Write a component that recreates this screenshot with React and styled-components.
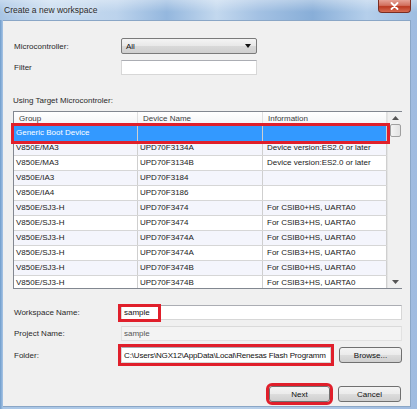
import React from 'react';
import styled, {createGlobalStyle} from "styled-components";

const Global = createGlobalStyle`
  html, body { margin: 0; padding: 0; }
  body {
    font-family: "Liberation Sans", Arial, sans-serif;
    font-size: 8px;
    color: #222;
  }
`

const rows = [
    ["V850E/MA3", "UPD70F3134A", "Device version:ES2.0 or later"],
    ["V850E/MA3", "UPD70F3134B", "Device version:ES2.0 or later"],
    ["V850E/IA3", "UPD70F3184", ""],
    ["V850E/IA4", "UPD70F3186", ""],
    ["V850E/SJ3-H", "UPD70F3474", "For CSIB0+HS, UARTA0"],
    ["V850E/SJ3-H", "UPD70F3474", "For CSIB3+HS, UARTA0"],
    ["V850E/SJ3-H", "UPD70F3474A", "For CSIB0+HS, UARTA0"],
    ["V850E/SJ3-H", "UPD70F3474A", "For CSIB3+HS, UARTA0"],
    ["V850E/SJ3-H", "UPD70F3474B", "For CSIB0+HS, UARTA0"],
    ["V850E/SJ3-H", "UPD70F3474B", "For CSIB3+HS, UARTA0"],
]

const App = () => {
    return (
        <>
            <Global/>
            <Window>
                <TitleBar>
                    <Title>Create a new workspace</Title>
                    <CloseButton>
                        <svg width="9" height="8" viewBox="0 0 9 8">
                            <path d="M1.5 1 L7.5 7 M7.5 1 L1.5 7" stroke="#fff" strokeWidth="1.8" strokeLinecap="round"/>
                        </svg>
                    </CloseButton>
                </TitleBar>
                <Panel>
                    <FormRow $top={17}>
                        <Label>Microcontroller:</Label>
                        <Combo>
                            <span>All</span>
                            <Arrow/>
                        </Combo>
                    </FormRow>
                    <FormRow $top={6}>
                        <Label>Filter</Label>
                        <Input $w={136}/>
                    </FormRow>
                    <Caption>Using Target Microcontroler:</Caption>
                    <Table>
                        <Grid>
                            <HeaderRow>
                                <HeadCell>Group</HeadCell>
                                <HeadCell>Device Name</HeadCell>
                                <HeadCell>Information</HeadCell>
                            </HeaderRow>
                            <SelectedRow>
                                <Cell>Generic Boot Device</Cell>
                                <Cell/>
                                <Cell/>
                            </SelectedRow>
                            <RowsClip>
                                {rows.map((r, i) => (
                                    <Row key={i} $alt={i % 2 === 0}>
                                        <Cell>{r[0]}</Cell>
                                        <Cell>{r[1]}</Cell>
                                        <Cell $info>{r[2]}</Cell>
                                    </Row>
                                ))}
                            </RowsClip>
                        </Grid>
                        <ScrollBar>
                            <ScrollArrow>
                                <svg width="7" height="4" viewBox="0 0 7 4"><path d="M0 4 L3.5 0 L7 4 Z" fill="#555"/></svg>
                            </ScrollArrow>
                            <Thumb/>
                            <Track/>
                            <ScrollArrow>
                                <svg width="7" height="4" viewBox="0 0 7 4"><path d="M0 0 L3.5 4 L7 0 Z" fill="#555"/></svg>
                            </ScrollArrow>
                        </ScrollBar>
                    </Table>
                    <FormRow $top={16}>
                        <Label>Workspace Name:</Label>
                        <Input>
                            <Value>sample</Value>
                            <Mark/>
                        </Input>
                    </FormRow>
                    <FormRow $top={6}>
                        <Label>Project Name:</Label>
                        <Input $readOnly>
                            <Value $muted>sample</Value>
                        </Input>
                    </FormRow>
                    <FormRow $top={6}>
                        <Label>Folder:</Label>
                        <FolderLine>
                            <Input $marked $h={16}>
                                <Value $tight>C:\Users\NGX12\AppData\Local\Renesas Flash Programm</Value>
                            </Input>
                            <Button>Browse...</Button>
                        </FolderLine>
                    </FormRow>
                    <Buttons>
                        <Button $marked $w={61}>Next</Button>
                        <Button>Cancel</Button>
                    </Buttons>
                </Panel>
            </Window>
        </>
    );
};

const Window = styled.div`
  width: 417px;
  height: 409px;
  display: flex;
  flex-direction: column;
  background: linear-gradient(90deg, #6f9ccc 0px, #a9c6e6 3px, #b7cfe9 60%, #9fbbe0 100%);
  overflow: hidden;
`

const TitleBar = styled.div`
  height: 20px;
  flex: none;
  display: flex;
  justify-content: space-between;
  align-items: flex-start;
  padding: 0 6px 0 4px;
  background:
    linear-gradient(180deg, rgba(255,255,255,0.35), rgba(255,255,255,0) 60%),
    linear-gradient(90deg, #a7c4e4 0%, #c9dcf0 12%, #bcd3ec 28%, #94b7de 40%, #c3d8ee 52%, #a3c1e3 62%, #88aed8 75%, #b5cfeb 88%, #9ebde1 100%);
`

const Title = styled.div`
  font-family: "Liberation Sans", Arial, sans-serif;
  font-size: 8.5px;
  color: #2a2a2a;
  line-height: 20px;
  text-shadow: 0 0 4px rgba(255,255,255,0.9);
`

const CloseButton = styled.div`
  width: 33px;
  height: 13px;
  display: flex;
  align-items: center;
  justify-content: center;
  box-sizing: border-box;
  border: 1px solid #7a2d22;
  border-top: none;
  border-radius: 0 0 4px 4px;
  background: linear-gradient(180deg, #e6a296 0%, #d2705e 45%, #bb3a22 55%, #d66b52 100%);
`

const Panel = styled.div`
  flex: 1;
  margin: 0 6px 2px 3px;
  padding: 0 8px 0 10px;
  background: #f0f0f0;
  border: 1px solid #8aa6c6;
  border-left: none;
  display: flex;
  flex-direction: column;
`

const FormRow = styled.div`
  display: grid;
  grid-template-columns: 108px minmax(0, 1fr);
  align-items: center;
  margin-top: ${p => p.$top}px;
`

const Label = styled.div`
  padding-left: 1px;
  color: #2a2a2a;
`

const Combo = styled.div`
  width: 136px;
  height: 16px;
  box-sizing: border-box;
  border: 1px solid #7a7a7a;
  border-radius: 2px;
  background: linear-gradient(180deg, #f4f4f4 0%, #e8e8e8 50%, #d9d9d9 51%, #cfcfcf 100%);
  display: flex;
  align-items: center;
  justify-content: space-between;
  padding: 0 5px 0 4px;
  color: #111;
`

const Arrow = styled.div`
  width: 0;
  height: 0;
  border-left: 3px solid transparent;
  border-right: 3px solid transparent;
  border-top: 4px solid #111;
`

const Input = styled.div`
  position: relative;
  width: ${p => p.$w ? `${p.$w}px` : 'auto'};
  flex: ${p => p.$w ? 'none' : 1};
  min-width: 0;
  height: ${p => p.$h || 15}px;
  box-sizing: border-box;
  border: 1px solid ${p => p.$readOnly ? '#e2e2e2' : '#d7d7d7'};
  border-top-color: ${p => p.$readOnly ? '#dadada' : '#abadb3'};
  background: ${p => p.$readOnly ? '#f3f3f3' : '#fff'};
  display: flex;
  align-items: center;
  padding-left: 2px;
  outline: ${p => p.$marked ? '3px solid #e01f2b' : 'none'};
`

const Value = styled.span`
  color: ${p => p.$muted ? '#555' : '#111'};
  white-space: nowrap;
  overflow: hidden;
  min-width: 0;
  letter-spacing: ${p => p.$tight ? '-0.15px' : 'normal'};
`

const Mark = styled.div`
  position: absolute;
  left: -4px;
  top: -2px;
  width: 43px;
  height: 18px;
  box-sizing: border-box;
  border: 3px solid #e01f2b;
`

const FolderLine = styled.div`
  display: flex;
  align-items: center;
  gap: 8px;
  min-width: 0;
`

const Caption = styled.div`
  margin-top: 21px;
  line-height: 10px;
  color: #2a2a2a;
`

const Table = styled.div`
  margin-top: 5px;
  height: 178px;
  box-sizing: border-box;
  border: 1px solid #828790;
  background: #fff;
  display: flex;
`

const Grid = styled.div`
  flex: 1;
  display: flex;
  flex-direction: column;
`

const columns = `124px 125px 124px`

const HeaderRow = styled.div`
  display: grid;
  grid-template-columns: ${columns};
  height: 14px;
  background: linear-gradient(180deg, #ffffff, #f3f4f6);
  border-bottom: 1px solid #e3e3e3;
  box-sizing: border-box;
`

const HeadCell = styled.div`
  padding-left: 5px;
  line-height: 13px;
  color: #3d3d3d;
  border-right: 1px solid #e0e0e0;
`

const SelectedRow = styled.div`
  position: relative;
  z-index: 1;
  display: grid;
  grid-template-columns: ${columns};
  height: 15px;
  background: #3399ff;
  color: #fff;
  outline: 3px solid #e01f2b;
  outline-offset: 0;
`

const RowsClip = styled.div`
  flex: 1;
  overflow: hidden;
`

const Row = styled.div`
  display: grid;
  grid-template-columns: ${columns};
  height: 15px;
  box-sizing: border-box;
  border-bottom: 1px solid #d6d6d6;
  background: ${p => p.$alt ? '#f4f5fc' : '#ffffff'};
  color: #1a1a1a;
`

const Cell = styled.div`
  padding-left: ${p => p.$info ? 4 : 2}px;
  line-height: 14px;
  border-right: 1px solid #cfcfcf;
  white-space: nowrap;
  overflow: hidden;
`

const ScrollBar = styled.div`
  width: 15px;
  flex: none;
  background: #f0f0f0;
  border-left: 1px solid #e4e4e4;
  display: flex;
  flex-direction: column;
  align-items: center;
`

const ScrollArrow = styled.div`
  height: 12px;
  display: flex;
  align-items: center;
  justify-content: center;
`

const Thumb = styled.div`
  width: 11px;
  height: 13px;
  box-sizing: border-box;
  border: 1px solid #a0a0a0;
  border-radius: 2px;
  background: linear-gradient(90deg, #f4f4f4, #e2e2e2);
`

const Track = styled.div`
  flex: 1;
`

const Buttons = styled.div`
  margin-top: 23px;
  display: flex;
  justify-content: flex-end;
  gap: 8px;
  padding-right: 1px;
`

const Button = styled.div`
  width: ${p => p.$w || 63}px;
  height: 16px;
  box-sizing: border-box;
  border: 1px solid #707070;
  border-radius: 3px;
  background: linear-gradient(180deg, #f4f4f4 0%, #ebebeb 50%, #dddddd 51%, #cfcfcf 100%);
  display: flex;
  align-items: center;
  justify-content: center;
  color: #111;
  flex: none;
  outline: ${p => p.$marked ? '3px solid #e01f2b' : 'none'};
`

export default App;
